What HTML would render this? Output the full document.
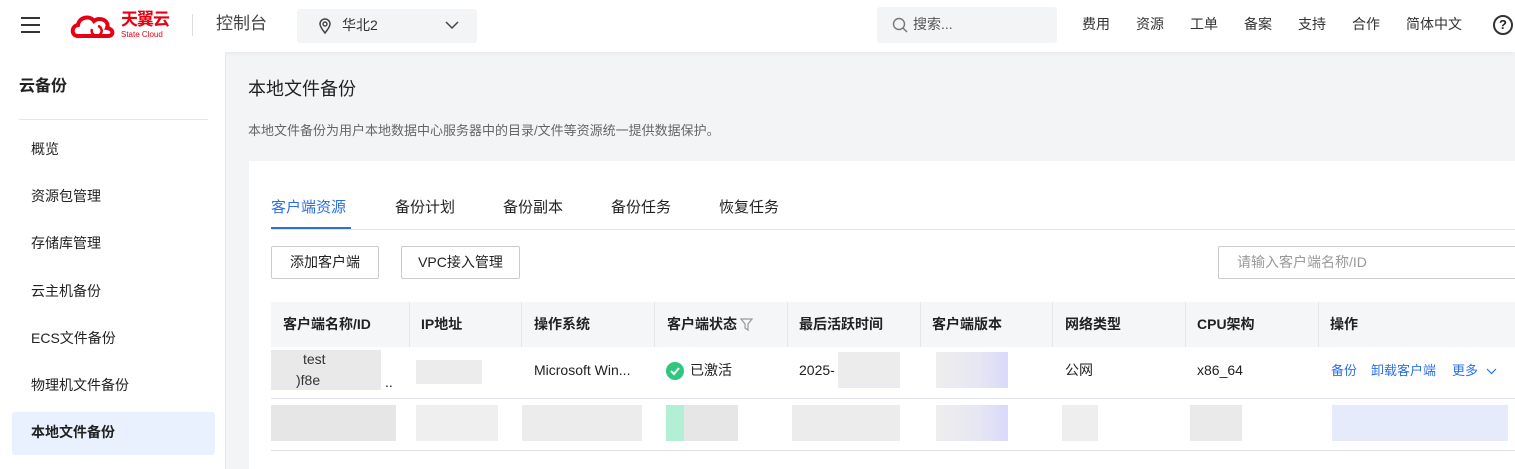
<!DOCTYPE html>
<html><head><meta charset="utf-8"><style>
*{margin:0;padding:0;box-sizing:border-box}
body{width:1515px;height:469px;overflow:hidden;background:#f3f4f6;font-family:"Liberation Sans","Noto Sans CJK SC",sans-serif;font-size:14px;color:#222;position:relative;line-height:1.2}
.a{position:absolute}
.hdr{left:0;top:0;width:1515px;height:52px;background:#fff;box-shadow:0 2px 4px rgba(0,0,0,.04)}
.side{left:0;top:52px;width:226px;height:417px;background:#fff;border-right:1px solid #e8e8e8}
.mi{position:absolute;left:31px;font-size:14px;color:#222}
.card{left:249px;top:161px;width:1266px;height:308px;background:#fff}
.btn{position:absolute;top:246px;height:33px;border:1px solid #ccc;border-radius:2px;background:#fff;font-size:14px;line-height:31px;text-align:center}
.th{position:absolute;top:316px;font-size:14px;font-weight:bold;color:#222}
.blur{position:absolute}
</style></head><body>
<div class="a hdr"></div>
<div class="a" style="left:21px;top:17px;width:19px;height:2px;background:#333;box-shadow:0 7px 0 #333,0 14px 0 #333"></div>
<svg class="a" style="left:70px;top:12px" width="50" height="28" viewBox="0 0 50 28"><path d="M8 24 C1 24 1 14 8 13 C9 5 20 3 24 9 C30 4 40 9 37 16 C44 17 44 24 38 24 Z" fill="none" stroke="#e60012" stroke-width="4"/><path d="M22 17 a5 5 0 1 0 6 -3" fill="none" stroke="#e60012" stroke-width="2.5"/></svg>
<div class="a" style="left:121px;top:11px;color:#e60012;font-size:17px;line-height:18px;font-weight:bold;letter-spacing:-1px">天翼云</div>
<div class="a" style="left:121px;top:30px;color:#e60012;font-size:8px;line-height:9px">State Cloud</div>
<div class="a" style="left:192px;top:14px;width:1px;height:22px;background:#ddd"></div>
<div class="a" style="left:216px;top:14px;font-size:17px;color:#444">控制台</div>
<div class="a" style="left:297px;top:9px;width:180px;height:34px;background:#f3f4f6;border-radius:3px"></div>
<svg class="a" style="left:318px;top:17px" width="14" height="18" viewBox="0 0 14 18"><path d="M7 16 C3 11 2 9 2 7 a5 5 0 0 1 10 0 c0 2-1 4-5 9z" fill="none" stroke="#444" stroke-width="1.5"/><circle cx="7" cy="7" r="2" fill="none" stroke="#444" stroke-width="1.4"/></svg>
<div class="a" style="left:342px;top:17px;font-size:14px;color:#333">华北2</div>
<svg class="a" style="left:445px;top:21px" width="14" height="9"><path d="M1 1 L7 7 L13 1" fill="none" stroke="#444" stroke-width="1.5"/></svg>
<div class="a" style="left:877px;top:7px;width:180px;height:36px;background:#f3f4f6;border-radius:3px"></div>
<svg class="a" style="left:892px;top:17px" width="16" height="16"><circle cx="7" cy="7" r="5.5" fill="none" stroke="#777" stroke-width="1.4"/><path d="M11 11 L15 15" stroke="#777" stroke-width="1.4"/></svg>
<div class="a" style="left:913px;top:16px;color:#555">搜索...</div>
<div class="a" style="left:1082px;top:16px;color:#333">费用</div>
<div class="a" style="left:1136px;top:16px;color:#333">资源</div>
<div class="a" style="left:1190px;top:16px;color:#333">工单</div>
<div class="a" style="left:1244px;top:16px;color:#333">备案</div>
<div class="a" style="left:1298px;top:16px;color:#333">支持</div>
<div class="a" style="left:1352px;top:16px;color:#333">合作</div>
<div class="a" style="left:1406px;top:16px;color:#333">简体中文</div>
<div class="a" style="left:1493px;top:15px;width:20px;height:20px;border:2px solid #333;border-radius:50%;text-align:center;font-size:13px;font-weight:bold;line-height:16px">?</div>

<div class="a side"></div>
<div class="a" style="left:19px;top:77px;font-size:16px;font-weight:bold">云备份</div>
<div class="a" style="left:19px;top:119px;width:189px;height:1px;background:#e5e5e5"></div>
<div class="mi" style="top:141px">概览</div>
<div class="mi" style="top:188px">资源包管理</div>
<div class="mi" style="top:235px">存储库管理</div>
<div class="mi" style="top:283px">云主机备份</div>
<div class="mi" style="top:330px">ECS文件备份</div>
<div class="mi" style="top:377px">物理机文件备份</div>
<div class="a" style="left:12px;top:412px;width:203px;height:43px;background:#e8f1fd;border-radius:3px"></div>
<div class="mi" style="top:424px;font-weight:bold">本地文件备份</div>

<div class="a" style="left:248px;top:79px;font-size:18px;color:#222">本地文件备份</div>
<div class="a" style="left:248px;top:123px;font-size:13px;color:#666">本地文件备份为用户本地数据中心服务器中的目录/文件等资源统一提供数据保护。</div>
<div class="a card"></div>
<div class="a" style="left:271px;top:199px;font-size:15px;color:#2b6fe6">客户端资源</div>
<div class="a" style="left:395px;top:199px;font-size:15px">备份计划</div>
<div class="a" style="left:503px;top:199px;font-size:15px">备份副本</div>
<div class="a" style="left:611px;top:199px;font-size:15px">备份任务</div>
<div class="a" style="left:719px;top:199px;font-size:15px">恢复任务</div>
<div class="a" style="left:271px;top:229px;width:1244px;height:1px;background:#e5e5e5"></div>
<div class="a" style="left:271px;top:227px;width:80px;height:2px;background:#2b6fe6"></div>
<div class="btn" style="left:271px;width:108px">添加客户端</div>
<div class="btn" style="left:401px;width:119px">VPC接入管理</div>
<div class="a" style="left:1218px;top:246px;width:300px;height:33px;border:1px solid #ccc;border-radius:2px;padding-left:18px;line-height:31px;color:#999">请输入客户端名称/ID</div>

<div class="a" style="left:271px;top:302px;width:1244px;height:45px;background:#f5f6f8"></div>
<div class="a" style="left:271px;top:398px;width:1244px;height:1px;background:#e4e4ee"></div>
<div class="a" style="left:271px;top:450px;width:1244px;height:1px;background:#ddd"></div>
<div class="a" style="left:409px;top:302px;width:1px;height:45px;background:#e6e6e6;box-shadow:112px 0 #e6e6e6,245px 0 #e6e6e6,378px 0 #e6e6e6,511px 0 #e6e6e6,643px 0 #e6e6e6,776px 0 #e6e6e6,909px 0 #e6e6e6"></div>
<div class="th" style="left:283px">客户端名称/ID</div>
<div class="th" style="left:421px">IP地址</div>
<div class="th" style="left:534px">操作系统</div>
<div class="th" style="left:667px">客户端状态</div>
<svg class="a" style="left:740px;top:318px" width="13" height="13"><path d="M1 1 H12 L8 6 V12 L5 10 V6 Z" fill="none" stroke="#999" stroke-width="1.2"/></svg>
<div class="th" style="left:799px">最后活跃时间</div>
<div class="th" style="left:932px">客户端版本</div>
<div class="th" style="left:1065px">网络类型</div>
<div class="th" style="left:1197px">CPU架构</div>
<div class="th" style="left:1330px">操作</div>

<div class="blur" style="left:271px;top:350px;width:110px;height:40px;background:#e4e4e4;opacity:.8"></div>
<div class="a" style="left:303px;top:351px;color:#333">test</div>
<div class="a" style="left:296px;top:372px;color:#333">)f8e</div>
<div class="a" style="left:385px;top:374px">..</div>
<div class="blur" style="left:416px;top:360px;width:66px;height:24px;background:#ececec"></div>
<div class="a" style="left:534px;top:362px;color:#222">Microsoft Win...</div>
<svg class="a" style="left:666px;top:362px" width="18" height="18"><circle cx="9" cy="9" r="9" fill="#2fc77d"/><path d="M5 9 L8 12 L13 6" fill="none" stroke="#fff" stroke-width="2"/></svg>
<div class="a" style="left:690px;top:362px">已激活</div>
<div class="a" style="left:799px;top:362px">2025-</div>
<div class="blur" style="left:838px;top:352px;width:62px;height:36px;background:#ececec"></div>
<div class="blur" style="left:936px;top:352px;width:72px;height:36px;background:linear-gradient(90deg,#eee,#e6e6f4 60%,#d9d9fb)"></div>
<div class="a" style="left:1065px;top:362px">公网</div>
<div class="a" style="left:1197px;top:362px">x86_64</div>
<div class="a" style="left:1331px;top:363px;font-size:13px;color:#2b6fe6">备份</div>
<div class="a" style="left:1371px;top:363px;font-size:13px;color:#2b6fe6">卸载客户端</div>
<div class="a" style="left:1452px;top:363px;font-size:13px;color:#2b6fe6">更多</div>
<svg class="a" style="left:1486px;top:368px" width="11" height="7"><path d="M1 1 L5.5 5.5 L10 1" fill="none" stroke="#2b6fe6" stroke-width="1.2"/></svg>

<div class="blur" style="left:271px;top:405px;width:125px;height:36px;background:#e2e2e2;opacity:.85"></div>
<div class="blur" style="left:416px;top:405px;width:82px;height:36px;background:#efefef"></div>
<div class="blur" style="left:522px;top:405px;width:120px;height:36px;background:#ececec"></div>
<div class="blur" style="left:666px;top:405px;width:18px;height:36px;background:#b3efd5"></div>
<div class="blur" style="left:684px;top:405px;width:54px;height:36px;background:#e6e6e6"></div>
<div class="blur" style="left:792px;top:405px;width:108px;height:36px;background:#ececec"></div>
<div class="blur" style="left:936px;top:405px;width:72px;height:36px;background:linear-gradient(90deg,#eee,#e6e6f4 60%,#d9d9fb)"></div>
<div class="blur" style="left:1062px;top:405px;width:36px;height:36px;background:#eee"></div>
<div class="blur" style="left:1190px;top:405px;width:52px;height:36px;background:#eaeaea"></div>
<div class="blur" style="left:1332px;top:405px;width:176px;height:36px;background:#e6ebfb"></div>
</body></html>
